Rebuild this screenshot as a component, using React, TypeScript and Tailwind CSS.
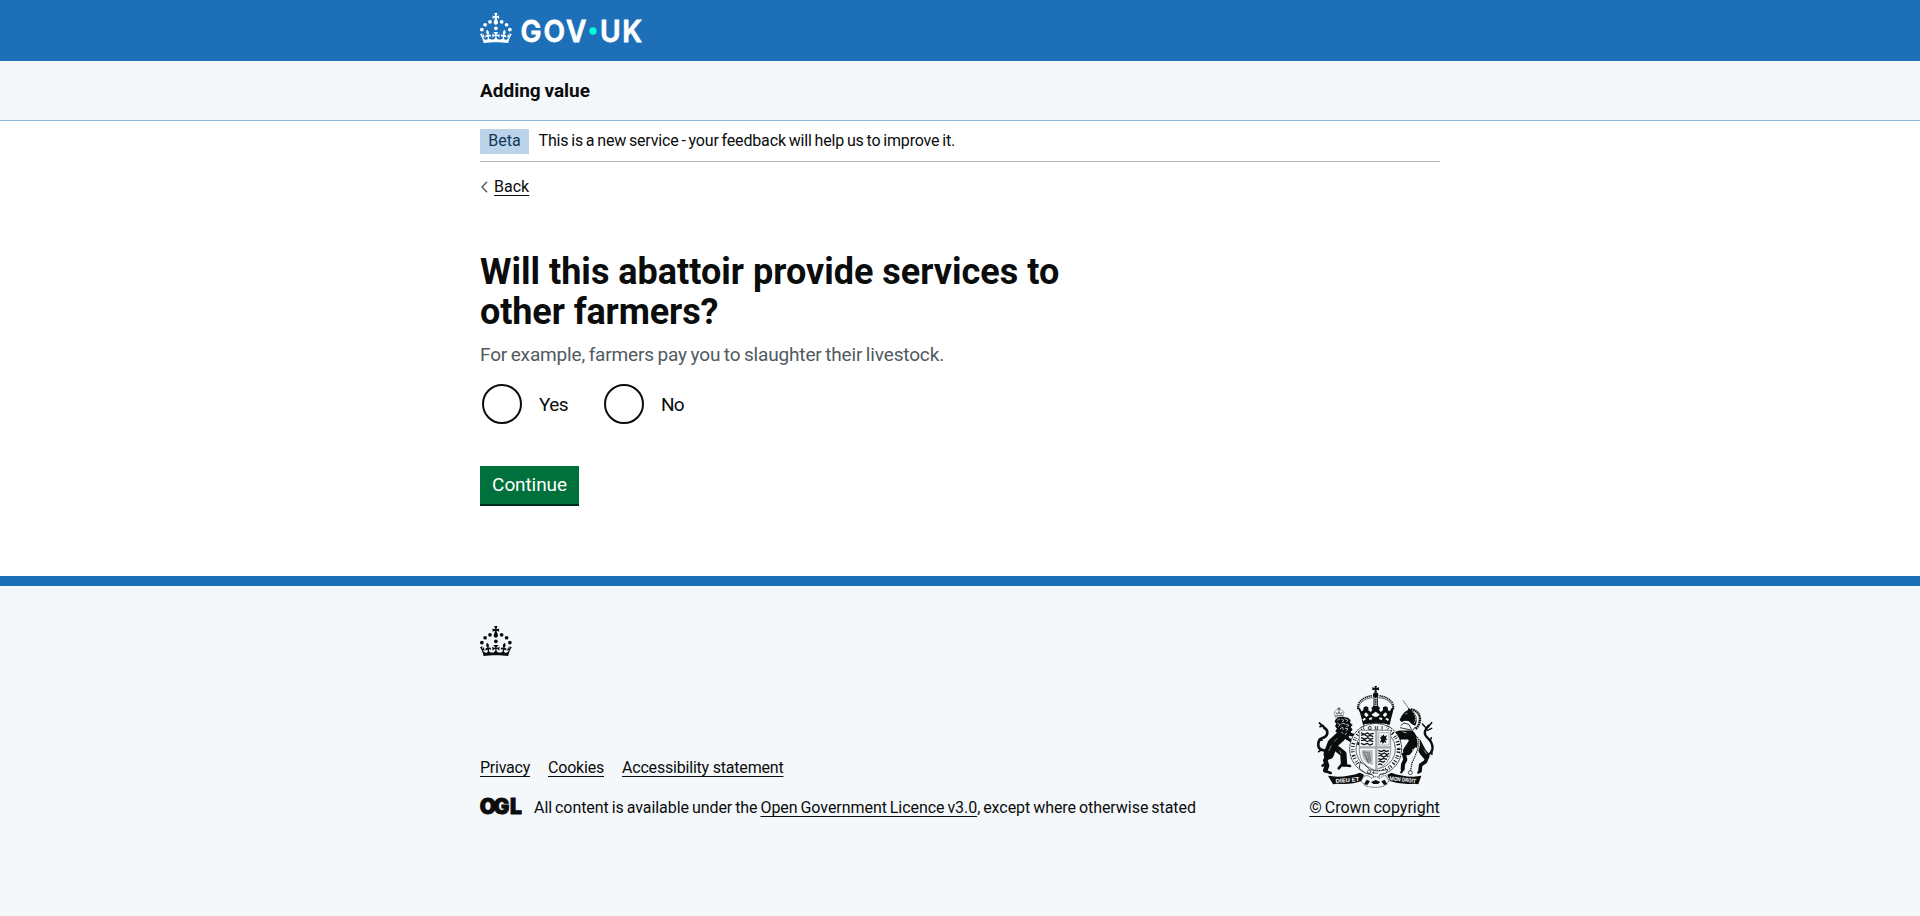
import type { ReactNode } from 'react';

const CROWN_PATH =
  'M33.1,9.8c.2-.1.3-.3.5-.5l4.6,2.4v-6.8l-4.6,1.5c-.1-.2-.3-.3-.5-.5l1.9-5.9h-6.7l1.9,5.9c-.2.1-.3.3-.5.5l-4.6-1.5v6.8l4.6-2.4c.1.2.3.3.5.5l-2.6,8c-.9,2.8,1.2,5.7,4.1,5.7h0c3,0,5.1-2.9,4.1-5.7l-2.6-8ZM37,37.9s-3.4,3.8-4.1,6.1c2.2,0,4.2-.5,6.4-2.8l-.7,8.5c-2-2.8-4.4-4.1-5.7-3.8.1,3.1.5,6.7,5.8,7.2,3.7.3,6.7-1.5,7-3.8.4-2.6-2-4.3-3.7-1.6-1.4-4.5,2.4-6.1,4.9-3.2-1.9-4.5-1.8-7.7,2.4-10.9,3,4,2.6,7.3-1.2,11.1,2.4-1.3,6.2,0,4,4.6-1.2-2.8-3.7-2.2-4.2.2-.3,1.7.7,3.7,3,4.2,1.9.3,4.7-.9,7-5.9-1.3,0-2.4.7-3.9,1.7l2.4-8c.6,2.3,1.4,3.7,2.2,4.5.6-1.6.5-2.8,0-5.3l5,1.8c-2.6,3.6-5.2,8.7-7.3,17.5-7.4-1.1-15.7-1.7-24.5-1.7h0c-8.8,0-17.1.6-24.5,1.7-2.1-8.9-4.7-13.9-7.3-17.5l5-1.8c-.5,2.5-.6,3.7,0,5.3.8-.8,1.6-2.3,2.2-4.5l2.4,8c-1.5-1-2.6-1.7-3.9-1.7,2.3,5,5.2,6.2,7,5.9,2.3-.4,3.3-2.4,3-4.2-.5-2.4-3-3.1-4.2-.2-2.2-4.6,1.6-6,4-4.6-3.7-3.7-4.2-7.1-1.2-11.1,4.2,3.2,4.3,6.4,2.4,10.9,2.5-2.8,6.3-1.3,4.9,3.2-1.8-2.7-4.1-1-3.7,1.6.3,2.3,3.3,4.1,7,3.8,5.4-.5,5.7-4.2,5.8-7.2-1.3-.2-3.7,1-5.7,3.8l-.7-8.5c2.2,2.3,4.2,2.7,6.4,2.8-.7-2.3-4.1-6.1-4.1-6.1h10.6,0Z';

function CrownShapes() {
  return (
    <g>
      <circle cx="20" cy="17.6" r="3.7" />
      <circle cx="10.2" cy="23.5" r="3.7" />
      <circle cx="3.7" cy="33.2" r="3.7" />
      <circle cx="31.7" cy="30.6" r="3.7" />
      <circle cx="43.3" cy="17.6" r="3.7" />
      <circle cx="53.2" cy="23.5" r="3.7" />
      <circle cx="59.7" cy="33.2" r="3.7" />
      <path d={CROWN_PATH} />
    </g>
  );
}

function GovUkLogo() {
  return (
    <svg viewBox="0 0 324 60" className="h-[30px] w-[162px] overflow-visible fill-white" role="img" aria-label="GOV.UK">
      <CrownShapes />
      <circle cx="226" cy="36" r="7.3" fill="#00ffe0" />
      <g
        className="font-['Inter',sans-serif] font-semibold"
        fontSize="61"
        stroke="#ffffff"
        strokeWidth="1.6"
        transform="scale(.92 1)"
      >
        <text x="88 138 187" y="58">
          GOV
        </text>
        <text x="261 309" y="58">
          UK
        </text>
      </g>
    </svg>
  );
}

function RoyalArms() {
  return (
    <svg viewBox="36 33 375 306" className="h-[102px] w-[125px]" fill="#0b0c0c" aria-hidden="true">
      {/* imperial crown */}
      <path d="M223 33h8l-2 6 8-2v9l-8-2 2 8h-8l2-8-8 2v-9l8 2z" />
      <circle cx="227" cy="60" r="8" />
      <g fill="none" stroke="#0b0c0c">
        <path d="M180 108C168 92 188 70 218 68M274 108C286 92 266 70 236 68" strokeWidth="2" />
        <path d="M174 102C170 84 188 65 218 62M280 102C284 84 266 65 236 62" strokeWidth="5" strokeDasharray="4 2" />
        <path d="M227 62v34" strokeWidth="13" />
        <path d="M227 66v28" stroke="#f4f8fb" strokeWidth="7" />
        <path d="M227 66v30" strokeWidth="5" strokeDasharray="4 2.5" />
      </g>
      <path d="M172 96l9 5 3 8 6-3 1-9 7-3 7 3 0 9 7 5 5-6-3-6 6-6h14l6 6-3 6 5 6 7-5 0-9 7-3 7 3 1 9 6 3 3-8 9-5-4 17-5 19-4 18q-40-14-80 0l-4-18-5-19z" />
      <g fill="#f4f8fb">
        <path d="M192 118l6-6 8 8-7 7zM214 119l13-9 13 9-9 6h-8zM262 118l-6-6-8 8 7 7z" />
        <path d="M187 133l7-5 4 5-8 5zM207 129l8-2 2 6-9 2zM239 127l8 2-1 6-9-2zM260 128l7 5-3 5-8-5z" />
      </g>

      {/* lion supporter */}
      <g fill="none" stroke="#0b0c0c" strokeLinecap="round" strokeLinejoin="round">
        <path d="M72 226C48 224 52 196 66 190C84 184 88 168 72 158" strokeWidth="8" />
        <path d="M74 158l-16-14M70 152l-10 3M66 196l-8-4M62 226l-6 4" strokeWidth="5" />
        <path d="M122 184l-24 22-12 32" strokeWidth="31" />
        <path d="M84 242l-8 14 5 16-5 14" strokeWidth="14" />
        <path d="M76 288l16 6M74 268l-6 4" strokeWidth="8" />
        <path d="M112 222l18 14 2 30" strokeWidth="19" />
        <path d="M130 270l20 3M126 268l-10 12" strokeWidth="8" />
        <path d="M134 186l24 14 18 6M134 174l34 8" strokeWidth="9" />
      </g>
      <path d="M106 134l8-7 14-2 16 3 8 8-2 7 8 6-6 7 6 8-6 6 4 7-10 5 2 12-16-3-16-6-2-9-8-7 5-8-6-8 4-7-5-6z" />
      <g fill="none" stroke="#f4f8fb" strokeWidth="2">
        <path d="M112 136l8-4M112 144l8 5-5 6M124 132l8 4-6 5M134 131l10 5-5 5M122 148l10-4 4 6M138 147l9 4-8 4M120 161l8-4 2 8M135 160l9 1-5 7M124 172l6 3M140 173l-5 7" />
        <path d="M94 212l-8 16M118 226l5 10M112 190l-10 10" strokeWidth="1.5" />
      </g>
      <path d="M106 127l-4-16 6-6 9-3 9 3 6 6-3 14z" fill="#f4f8fb" stroke="#0b0c0c" strokeWidth="1.5" strokeDasharray="3 1" />
      <path d="M117 97v20M113 100h8M107 111l5 7 5-6 5 6 5-7M106 123l23-2" stroke="#0b0c0c" strokeWidth="1.8" fill="none" />

      {/* unicorn supporter */}
      <path d="M309 76l19 27" stroke="#0b0c0c" strokeWidth="2" strokeDasharray="4 1" />
      <path d="M299 134l6-12 9-11 9-5 3-7 8 6 8 7 7 12 1 16-4 12-10-4-10-10-12-1-9 4-4-4z" />
      <path d="M332 103q26 4 28 28q0 18-14 32" fill="none" stroke="#0b0c0c" strokeWidth="7" strokeDasharray="5 1.5" />
      <path d="M338 110q14 14 5 34" stroke="#f4f8fb" strokeWidth="2.5" strokeDasharray="6 2" fill="none" />
      <path d="M316 117l6-2" stroke="#f4f8fb" strokeWidth="2" />
      <path d="M302 152l10-8 14 4 8 14M300 158l38 8 8-10" fill="none" stroke="#0b0c0c" strokeWidth="2.5" />
      <g fill="none" stroke="#0b0c0c" strokeLinecap="round" strokeLinejoin="round">
        <path d="M300 180l32 0 14 24" strokeWidth="27" />
        <path d="M290 172l-8 14 6 8M300 190l-4 14-10 8" strokeWidth="6" />
        <path d="M338 204l-16 24" strokeWidth="26" />
        <path d="M352 200l16 30 10 12" strokeWidth="21" />
        <path d="M312 238l4 16-7 14-1 14" strokeWidth="12" />
        <path d="M382 246l-6 14-14 10-2 18" strokeWidth="11" />
        <path d="M308 284l-4 8M360 288l-5 5" strokeWidth="7" />
        <path d="M384 238C404 232 400 204 384 190C368 176 374 164 386 152" strokeWidth="7" />
        <path d="M384 156l11-13M378 158l-11-11M382 166l13-6M390 198l4-10M394 226l2 12" strokeWidth="4.5" />
      </g>
      <path d="M308 170l12 4M322 198l-8 12M372 226l8 10M336 222l8 10" stroke="#f4f8fb" strokeWidth="2" fill="none" />
      <path d="M352 186q8 16 2 34t-18 44l-5 30" fill="none" stroke="#f4f8fb" strokeWidth="7" />
      <path d="M352 186q8 16 2 34t-18 44l-5 26" fill="none" stroke="#0b0c0c" strokeWidth="3.5" strokeDasharray="4 2.5" />
      <circle cx="331" cy="293" r="6" fill="#f4f8fb" stroke="#0b0c0c" strokeWidth="2" />

      {/* garter */}
      <circle cx="227" cy="222" r="68" fill="none" stroke="#f4f8fb" strokeWidth="20" />
      <circle cx="227" cy="222" r="78" fill="none" stroke="#0b0c0c" strokeWidth="2.4" strokeDasharray="9 1.5" />
      <circle cx="227" cy="222" r="59" fill="none" stroke="#0b0c0c" strokeWidth="1.8" />
      <circle cx="227" cy="222" r="69" fill="none" stroke="#0b0c0c" strokeWidth="11" strokeDasharray="3 5 4 8 3 4 2 8" />
      <path d="M194 147h66v17h-66z" fill="#f4f8fb" />
      <path d="M184 157q43-24 86 0" fill="none" stroke="#0b0c0c" strokeWidth="2" />
      <text x="203" y="164" fontSize="17" textLength="46" className="font-['Roboto',sans-serif] font-bold">
        QUI
      </text>

      {/* shield */}
      <path d="M178 166h94v62q0 40-47 58q-47-18-47-58z" fill="#f4f8fb" stroke="#8d9193" strokeWidth="3" />
      <path d="M229 166v119M179 217h92" stroke="#a4a8aa" strokeWidth="7" />
      <path
        d="M183 173l10 5 9-4 7 4 12-3M183 181l8-3 12 6 8-3 9 4M183 188l12 4 8-4 8 5 9-3M183 197l10-2 9 5 7-4 11 4M183 205l9 4 10-4 8 5 9-4"
        fill="none"
        stroke="#0b0c0c"
        strokeWidth="3.6"
      />
      <path d="M236 173h31v37h-31z" fill="none" stroke="#8d9193" strokeWidth="2" />
      <path d="M241 180l6 4 3-6 4 6 7-3-3 8 4 5-6 1 3 10-6-4-5 6-2-7-7 3 5-10-5-5 6-2z" />
      <path d="M185 226h33v44q-33-8-33-44z" fill="#b3b7b9" />
      <path d="M190 230l18 4 4 24-8 6zM196 236l9 24M203 235l4 22" fill="none" stroke="#55595b" strokeWidth="2" />
      <path
        d="M235 226l9 4 8-4 7 4 8-3M235 234l10 4 8-4 8 5 6-4M235 243l7-2 9 5 8-4 6 3M235 251l8 3 8-4 10 3M235 260l6-2 8 4 6-4M235 269l4-2 8 2"
        fill="none"
        stroke="#0b0c0c"
        strokeWidth="3.8"
      />

      {/* garter buckle */}
      <path d="M180 262l10 4 20 18 22 4 32-4-6 10-18 4-6 12-10-2-8-10-20-4-18-14z" fill="#f4f8fb" stroke="#0b0c0c" strokeWidth="2" />
      <circle cx="207" cy="290" r="5" fill="none" stroke="#0b0c0c" strokeWidth="2" />
      <path d="M221 287v10M216 293l18 2" stroke="#0b0c0c" strokeWidth="1.8" />

      {/* motto scroll */}
      <path d="M84 302l28 3q38-1 68-12l12 6-7 19q-32 12-72 8l-14 2z" />
      <path d="M364 302l-24 3q-36-1-66-12l-12 6 7 19q34 12 74 8l12 2z" />
      <g fill="#f4f8fb" fontSize="17" className="font-['Roboto',sans-serif] font-bold">
        <text x="107" y="321" textLength="72" lengthAdjust="spacingAndGlyphs" transform="rotate(-5 143 318)">
          DIEU ET
        </text>
        <text x="268" y="320" textLength="80" lengthAdjust="spacingAndGlyphs" transform="rotate(6 309 318)">
          MON DROIT
        </text>
      </g>
      <path d="M192 304q12-6 22 6 12-10 26 0 10-12 20-6l7 14-12 14q-28 10-60 0l-12-14z" fill="#f4f8fb" stroke="#0b0c0c" strokeWidth="2" strokeDasharray="5 2" />
      <path d="M192 328l8-14 10 5-8 11zM262 328l-8-14-10 5 8 11zM213 321l14-6 14 6-7 6h-14z" />
    </svg>
  );
}

function OglLogo() {
  return (
    <svg viewBox="0 0 41 17" className="-mt-[3px] h-[17px] w-[41px] overflow-visible" role="img" aria-label="Open Government Licence">
      <g
        fontSize="21"
        stroke="#0b0c0c"
        strokeWidth="0.9"
        className="fill-[#0b0c0c] font-['Inter',sans-serif] font-black"
      >
        <text x="-0.2 13.6 30" y="16.2">
          OGL
        </text>
      </g>
    </svg>
  );
}

function Link({ children, className = '' }: { children: ReactNode; className?: string }) {
  return (
    <a href="#" className={`underline decoration-1 underline-offset-[3px] [text-decoration-skip-ink:none] ${className}`}>
      {children}
    </a>
  );
}

function Radio({ label, id }: { label: string; id: string }) {
  return (
    <div className="flex items-center">
      <input
        id={id}
        type="radio"
        name="otherFarmers"
        className="m-0.5 size-10 appearance-none rounded-full border-2 border-[#0b0c0c]"
      />
      <label htmlFor={id} className="px-[15px] text-[19px] leading-[25px] tracking-[-0.6px]">
        {label}
      </label>
    </div>
  );
}

export default function App() {
  return (
    <div className="flex min-h-screen flex-col bg-white font-['Roboto',sans-serif] text-base leading-5 text-[#0b0c0c]">
      <header>
        <div className="h-[61px] bg-[#1d70b8]">
          <div className="mx-auto w-[960px] pt-[13px]">
            <GovUkLogo />
          </div>
        </div>
        <div className="h-[60px] border-b border-[#8eb8dc] bg-[#f4f8fb]">
          <div className="mx-auto w-[960px] pt-[17px]">
            <span className="text-[19px] leading-[25px] font-bold [word-spacing:-1px]">Adding value</span>
          </div>
        </div>
      </header>

      <div className="mx-auto w-[960px]">
        <div className="flex h-[41px] items-start border-b border-[#b1b4b6] pt-2">
          <strong className="h-[25px] w-[49px] bg-[#bbd4ea] text-center leading-6 font-normal text-[#0f385c]">Beta</strong>
          <span className="ml-[9.5px] leading-6 tracking-[-0.155px] [word-spacing:-1px]">
            This is a new service - your feedback will help us to improve it.
          </span>
        </div>

        <div className="mt-[15px] flex h-5 items-center">
          <svg viewBox="0 0 8 12" className="mr-1.5 h-3 w-2 fill-none stroke-[#505a5f] stroke-[1.4]">
            <path d="M7 0.8L2 6l5 5.2" />
          </svg>
          <Link>Back</Link>
        </div>

        <main className="h-[379px] pt-[55px]">
          <h1 className="w-[640px] text-[36px] leading-10 font-bold">
            Will this abattoir provide services to <span className="tracking-[-0.1px]">other farmers?</span>
          </h1>
          <p className="mt-[10px] text-[19px] leading-[25px] tracking-[-0.15px] text-[#505a5f] [word-spacing:-1px]">
            For example, farmers pay you to slaughter their livestock.
          </p>
          <div className="mt-[15px] flex gap-[19px]">
            <Radio id="yes" label="Yes" />
            <Radio id="no" label="No" />
          </div>
          <button
            type="button"
            className="mt-10 block h-[38px] w-[99px] bg-[#00703c] text-[19px] leading-[38px] tracking-[-0.1px] text-white shadow-[0_2px_0_#002d18]"
          >
            Continue
          </button>
        </main>
      </div>

      <footer className="grow border-t-[10px] border-[#1d70b8] bg-[#f4f8fb]">
        <div className="mx-auto w-[960px] pt-10">
          <svg viewBox="0 0 64 60" className="h-[30px] w-8 fill-[#0b0c0c]" aria-hidden="true">
            <CrownShapes />
          </svg>
          <div className="mt-[30px] flex items-end justify-between">
            <div>
              <div className="flex gap-[18px]">
                <Link className="tracking-[-0.24px]">Privacy</Link>
                <Link className="tracking-[-0.2px]">Cookies</Link>
                <Link className="tracking-[-0.2px]">Accessibility statement</Link>
              </div>
              <div className="mt-5 flex items-center">
                <OglLogo />
                <p className="ml-[13px] tracking-[-0.05px] whitespace-pre [word-spacing:-1px]">
                  All content is available under the <Link>Open Government Licence v3.0</Link>, except where otherwise stated
                </p>
              </div>
            </div>
            <div className="flex w-[131px] flex-col items-center">
              <RoyalArms />
              <Link className="mt-[10px] whitespace-nowrap [word-spacing:-1px]">© Crown copyright</Link>
            </div>
          </div>
        </div>
      </footer>
    </div>
  );
}
